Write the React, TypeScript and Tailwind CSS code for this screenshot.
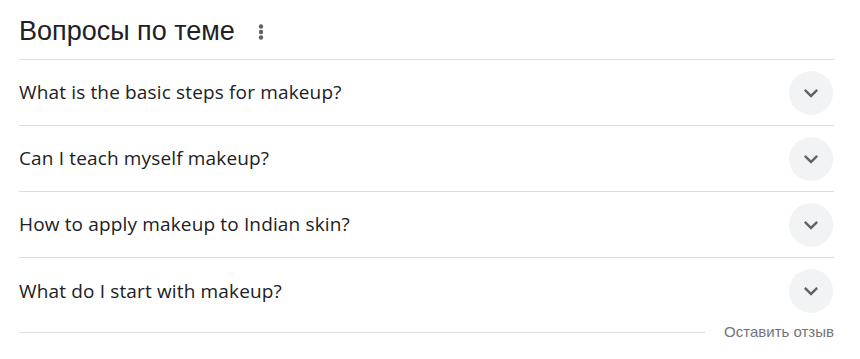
import React from "react";

const questions = [
  "What is the basic steps for makeup?",
  "Can I teach myself makeup?",
  "How to apply makeup to Indian skin?",
  "What do I start with makeup?",
];

function Chevron() {
  return (
    <svg width="28" height="28" viewBox="0 0 24 24" fill="#5f6368">
      <path d="M16.59 8.59 12 13.17 7.41 8.59 6 10l6 6 6-6z" />
    </svg>
  );
}

export default function App() {
  return (
    <div className="w-[860px] h-[359px] bg-white pl-[19px] pr-[26px]" style={{ fontFamily: "Arial" }}>
      <div className="h-[60px] flex items-start pt-[16px] border-b border-[#dadce0]">
        <div className="flex items-center">
          <span className="text-[27px] leading-[31px] text-[#202124] [font-family:'Liberation_Sans',Arial,sans-serif]">
            Вопросы по теме
          </span>
          <svg className="ml-[14px]" width="24" height="24" viewBox="0 0 24 24" fill="#5f6368">
            <circle cx="12" cy="6.5" r="2.2" />
            <circle cx="12" cy="12" r="2.2" />
            <circle cx="12" cy="17.5" r="2.2" />
          </svg>
        </div>
      </div>
      {questions.map((q, i) => (
        <div
          key={q}
          className={
            i < 3
              ? "h-[66px] flex items-center justify-between border-b border-[#dadce0]"
              : "h-[66px] flex items-center justify-between"
          }
        >
          <span className="text-[19px] tracking-[0.15px] text-[#202124] [font-family:'Open_Sans',sans-serif]">{q}</span>
          <div className="w-[44px] h-[44px] rounded-full bg-[#f1f3f4] flex items-center justify-center mr-[1px]">
            <Chevron />
          </div>
        </div>
      ))}
      <div className="h-[16px] flex items-center">
        <div className="flex-1 h-px bg-[#dadce0]" />
        <span className="ml-[19px] text-[15px] leading-[16px] text-[#70757a] [font-family:'Liberation_Sans',Arial,sans-serif]">
          Оставить отзыв
        </span>
      </div>
    </div>
  );
}
